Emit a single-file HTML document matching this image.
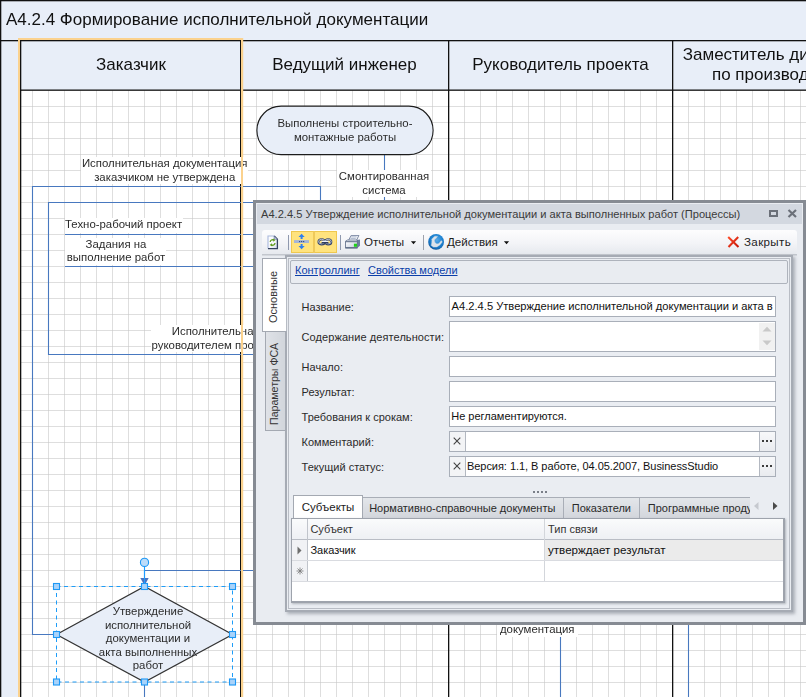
<!DOCTYPE html>
<html>
<head>
<meta charset="utf-8">
<title>A4.2.4</title>
<style>
html,body{margin:0;padding:0;}
body{width:806px;height:697px;overflow:hidden;background:#fff;position:relative;font-family:"Liberation Sans",sans-serif;}
#diagram{position:absolute;left:0;top:0;width:806px;height:697px;}
.abs{position:absolute;}
.vt,.hd,.ttl{will-change:transform;}
.vt{font-family:"Liberation Sans",sans-serif;font-size:11.4px;color:#2b2b2b;position:absolute;white-space:nowrap;text-align:center;line-height:13.7px;background:#fff;}
.hd{position:absolute;font-size:17px;color:#111;text-align:center;white-space:nowrap;}
/* dialog */
#dlg{position:absolute;left:253px;top:200px;width:553px;height:425px;background:#868b93;font-size:11px;color:#222;}
#dlg .inner{position:absolute;left:3px;top:3px;width:547px;height:419px;background:#e9ecf1;}
#dlg .title{position:absolute;left:1px;top:1px;width:545px;height:20px;background:#d3d8e0;}
.lbl{position:absolute;left:45.6px;white-space:nowrap;font-size:11px;color:#2a2a2a;line-height:13px;}
.fld{position:absolute;left:193px;width:325px;height:19px;border:1px solid #a9afb9;background:#fff;font-size:11px;line-height:19px;white-space:nowrap;overflow:hidden;color:#111;}

.tbt{font-size:11.6px;line-height:16px;color:#1e1e1e;white-space:nowrap;}
.lnk{font-size:11px;line-height:14px;color:#0b3ea8;text-decoration:underline;white-space:nowrap;}
.vtab span{position:absolute;left:50%;top:50%;height:14px;line-height:14px;margin-top:-7px;text-align:center;white-space:nowrap;font-size:11px;color:#333;transform-origin:center center;transform:rotate(-90deg);}
.xb{position:absolute;left:194px;width:15px;height:19px;background:#f3f4f6;border-right:1px solid #b3b8c1;}
.eb{position:absolute;left:503.4px;width:14.6px;height:19px;background:linear-gradient(#f7f8fa,#e9ebef);border-left:1px solid #b3b8c1;}
.eb i{position:absolute;top:8px;width:2px;height:2px;background:#3c3c3c;}
.eb i:nth-child(1){left:2px;}.eb i:nth-child(2){left:5.6px;}.eb i:nth-child(3){left:9.2px;}
.btab{height:20px;border:1px solid #a9aeb7;border-bottom:none;border-left:none;background:linear-gradient(#e3e6ea,#d3d6dc);text-align:center;line-height:20px;font-size:11px;color:#2a2a2a;white-space:nowrap;}
.gt{font-size:11px;line-height:14px;color:#111;white-space:nowrap;}
</style>
</head>
<body>
<svg id="diagram" width="806" height="697" viewBox="0 0 806 697">
  <defs>
    <pattern id="grid" x="32" y="106" width="16" height="16" patternUnits="userSpaceOnUse">
      <rect x="0" y="0" width="1" height="16" fill="#dedede"/>
      <rect x="0" y="0" width="16" height="1" fill="#dedede"/>
      <rect x="0" y="0" width="1" height="1" fill="#d0d0d0"/>
    </pattern>
  </defs>
  <!-- page bg -->
  <rect x="0" y="0" width="806" height="697" fill="#e8eef8"/>
  <!-- grid area -->
  <rect x="21" y="90" width="785" height="607" fill="#fff"/>
  <rect x="21" y="90" width="785" height="607" fill="url(#grid)"/>
  <!-- outer borders -->
  <rect x="0" y="0" width="806" height="1.3" fill="#111"/>
  <rect x="0" y="0" width="1.3" height="697" fill="#111"/>
  <rect x="0" y="40" width="806" height="1.3" fill="#111"/>
  <rect x="20" y="89.5" width="786" height="1.3" fill="#111"/>
  <!-- lane dividers -->
  <rect x="20" y="40" width="1.3" height="657" fill="#111"/>
  <rect x="240" y="40" width="1.3" height="657" fill="#111"/>
  <rect x="448" y="40" width="1.3" height="657" fill="#111"/>
  <rect x="672" y="40" width="1.3" height="657" fill="#111"/>
  <!-- orange selection -->
  <rect x="18" y="38" width="2" height="659" fill="#fbd28e"/>
  <rect x="18" y="38" width="225" height="2" fill="#fbd28e"/>
  <rect x="241.3" y="38" width="1.9" height="659" fill="#fbd28e"/>

  <!-- connectors -->
  <g fill="none" stroke="#4878bf" stroke-width="1.1">
    <path d="M320.5 200 V186.5 H32.5 V634.5 H56"/>
    <path d="M253 202.5 H48.5 V354.5 H253"/>
    <path d="M65 234.5 H253"/>
    <path d="M65 266.5 H253"/>
    <path d="M384.5 155 V200"/>
    <path d="M253 570.5 H144.5 V580"/>
    <path d="M144.5 566.5 V583" stroke="#1d9bff"/>
    <path d="M144.5 682 V697"/>
    <path d="M560.5 624 V697"/>
    <path d="M688.5 624 V697"/>
  </g>
  <path d="M140.3 578 H148.7 L144.5 585.5 Z" fill="#4a73c0"/><rect x="144" y="578" width="1" height="6" fill="#1d9bff"/>

  <!-- rounded start shape -->
  <rect x="256.9" y="106.15" width="176.2" height="48.5" rx="24.2" ry="24.2" fill="#e8eef8" stroke="#1c1c1c" stroke-width="1.1"/>
  <!-- diamond -->
  <path d="M56.5 634.5 L144.5 586.5 L232.5 634.5 L144.5 682 Z" fill="#e8eef8" stroke="#333" stroke-width="1.2"/>
  <!-- selection -->
  <rect x="56.5" y="586.5" width="176" height="95.5" fill="none" stroke="#1e9df8" stroke-width="1" stroke-dasharray="4,3.5"/>
  <g fill="#a9d3fa" stroke="#1d98f5" stroke-width="1.1">
    <rect x="53.5" y="583.5" width="6" height="6"/><rect x="141.5" y="583.5" width="6" height="6"/><rect x="229.5" y="583.5" width="6" height="6"/>
    <rect x="53.5" y="631.5" width="6" height="6"/><rect x="229.5" y="631.5" width="6" height="6"/>
    <rect x="53.5" y="679" width="6" height="6"/><rect x="141.5" y="679" width="6" height="6"/><rect x="229.5" y="679" width="6" height="6"/>
    <circle cx="144.5" cy="562.4" r="4.1" fill="#bcdcfa"/>
  </g>
</svg>

<!-- Title + headers -->
<div class="abs ttl" style="left:6px;top:0;height:40px;line-height:40px;font-size:17px;color:#111;white-space:nowrap;">А4.2.4 Формирование исполнительной документации</div>
<div class="hd" style="left:21px;top:40.7px;width:220px;line-height:48px;">Заказчик</div>
<div class="hd" style="left:241px;top:40.7px;width:207px;line-height:48px;">Ведущий инженер</div>
<div class="hd" style="left:449px;top:40.7px;width:223px;line-height:48px;">Руководитель проекта</div>
<div class="abs" style="left:672.5px;top:44.7px;width:133.5px;height:42px;overflow:hidden;"><div class="hd" style="left:0;top:0;width:208px;line-height:20px;">Заместитель директора<br>по производству</div></div>

<!-- Visio text labels -->
<div class="vt" style="left:256.6px;top:115.6px;width:176px;background:none;line-height:14px;">Выполнены строительно-<br>монтажные работы</div>
<div class="vt" style="left:81.2px;top:157px;width:167.4px;height:27.4px;line-height:13.6px;">Исполнительная документация<br>заказчиком не утверждена</div>
<div class="vt" style="left:337px;top:170px;width:94px;">Смонтированная<br>система</div>
<div class="vt" style="left:65px;top:218px;width:118px;height:14.5px;text-align:left;">Техно-рабочий проект</div>
<div class="vt" style="left:65px;top:238.3px;width:102px;height:27px;line-height:13px;clip-path:inset(0 1.4px 0 0);">Задания на<br>выполнение работ</div>
<div class="vt" style="left:151px;top:325px;width:110px;height:27.4px;text-align:left;overflow:hidden;"><span style="margin-left:20.8px;">Исполнительная документация</span><br><span style="margin-left:0.6px;">руководителем проекта не утверждена</span></div>
<div class="vt" style="left:88px;top:605.2px;width:120px;background:none;line-height:13.6px;">Утверждение<br>исполнительной<br>документации и<br>акта выполненных<br>работ</div>
<div class="vt" style="left:496.5px;top:622.7px;width:80.5px;height:13.6px;">документация</div>
<!-- orange lane selection on top of labels -->
<div class="abs" style="left:241.3px;top:38px;width:1.9px;height:659px;background:#fbd28e;"></div>

<!-- DIALOG -->
<div id="dlg">
 <div class="inner">
  <div class="title"></div>
  <div class="abs" style="left:5px;top:4px;line-height:14px;font-size:11.1px;color:#3a3a3a;white-space:nowrap;">А4.2.4.5 Утверждение исполнительной документации и акта выполненных работ (Процессы)</div>
  <!-- window buttons -->
  <div class="abs" style="left:513px;top:7px;width:5px;height:3px;border:2px solid #6b7079;"></div>
  <svg class="abs" style="left:531px;top:6px;" width="11" height="9" viewBox="0 0 11 9"><path d="M1.5 1 L9 8 M9 1 L1.5 8" stroke="#6b7079" stroke-width="2.2" fill="none"/></svg>

  <!-- toolbar -->
  <div class="abs" id="tb" style="left:6px;top:27px;width:535px;height:24px;border-radius:3px;background:linear-gradient(#fdfdfe,#f3f4f7 55%,#e6e9ee);"></div>
  <div class="abs" style="left:6px;top:51px;width:535px;height:2px;background:linear-gradient(#b9bdc5,#dfe2e7);"></div>
  <!-- icon1 doc refresh -->
  <svg class="abs" style="left:10.7px;top:31.5px;" width="12" height="15" viewBox="0 0 12 15">
    <defs><linearGradient id="pg" x1="0" y1="0" x2="1" y2="1"><stop offset="0" stop-color="#ffffff"/><stop offset="0.6" stop-color="#f4f6fb"/><stop offset="1" stop-color="#cfd8ea"/></linearGradient></defs>
    <path d="M1 1 H7.2 L10.4 4.2 V13.6 H1 Z" fill="url(#pg)"/>
    <path d="M1 13.6 V1 H7.2" fill="none" stroke="#a9b9dc" stroke-width="1.1"/>
    <path d="M7.2 1 L10.4 4.2 V13.6 H1" fill="none" stroke="#33425f" stroke-width="1.3"/>
    <path d="M7.2 1 V4.2 H10.4 Z" fill="#c9d4ea" stroke="#55648a" stroke-width="0.6"/>
    <path d="M3.2 7 A2.5 2.5 0 0 1 6.8 5" fill="none" stroke="#5f9c1c" stroke-width="1.3"/>
    <path d="M8 8 A2.5 2.5 0 0 1 4.4 10" fill="none" stroke="#5f9c1c" stroke-width="1.3"/>
    <path d="M6 3.6 L8.5 5 L6.3 6.7 Z" fill="#5f9c1c"/><path d="M5.2 11.4 L2.7 10 L4.9 8.3 Z" fill="#5f9c1c"/>
  </svg>
  <div class="abs" style="left:32px;top:32px;width:1.2px;height:15px;background:#8f99ae;"></div>
  <!-- yellow toggles -->
  <div class="abs" style="left:35px;top:28px;width:43.8px;height:20px;background:#ffe37e;border:1px solid #efc84f;"></div>
  <div class="abs" style="left:57.4px;top:28px;width:1.4px;height:22px;background:#efc95a;"></div>
  <svg class="abs" style="left:37px;top:30px;" width="17" height="17" viewBox="0 0 17 17">
    <rect x="1" y="7.1" width="15" height="2.9" fill="#a5b5d6"/>
    <rect x="6.1" y="8" width="1.1" height="1.1" fill="#27427f"/><rect x="8.1" y="8" width="1.1" height="1.1" fill="#27427f"/><rect x="10.1" y="8" width="1.1" height="1.1" fill="#27427f"/>
    <path d="M8.6 0.8 L11.7 4 H9.6 V6 H7.6 V4 H5.5 Z" fill="#2f7fee"/>
    <path d="M8.6 16.3 L11.7 13.1 H9.6 V11.1 H7.6 V13.1 H5.5 Z" fill="#2f7fee"/>
  </svg>
  <svg class="abs" style="left:60.5px;top:35.3px;" width="16" height="8" viewBox="0 0 16 8">
    <ellipse cx="4.6" cy="3.9" rx="3.1" ry="2.5" fill="none" stroke="#36456a" stroke-width="2.1"/>
    <ellipse cx="11.2" cy="3.9" rx="3.1" ry="2.5" fill="none" stroke="#36456a" stroke-width="2.1"/>
    <ellipse cx="4.6" cy="3.6" rx="3" ry="2.3" fill="none" stroke="#e4e9f4" stroke-width="0.7"/>
    <ellipse cx="11.2" cy="3.6" rx="3" ry="2.3" fill="none" stroke="#e4e9f4" stroke-width="0.7"/>
    <rect x="4.6" y="2.9" width="6.8" height="1.1" fill="#eef1f8"/>
    <rect x="4.6" y="4" width="6.8" height="1.5" fill="#2f3d5c"/>
  </svg>
  <div class="abs" style="left:84px;top:32px;width:1.2px;height:15px;background:#8f99ae;"></div>
  <!-- printer -->
  <svg class="abs" style="left:89px;top:32px;" width="16" height="14" viewBox="0 0 16 14">
    <defs><linearGradient id="pb" x1="0" y1="0" x2="1" y2="1"><stop offset="0" stop-color="#fbfcfe"/><stop offset="1" stop-color="#c3ccdb"/></linearGradient></defs>
    <path d="M6.2 0.4 H13.9 L11.4 5.6 H3.4 Z" fill="#f4f6fa" stroke="#5f6f8e" stroke-width="0.8"/>
    <path d="M6.2 1.9 H11.6 M5.4 3.6 H10.8" stroke="#9aa8c2" stroke-width="0.8"/>
    <path d="M12 5 L15 4.4 V10.8 L12.2 13 Z" fill="#6d7f9f"/>
    <path d="M0.4 6.4 L2.2 5 H12.2 L12.2 6.8 Z" fill="#dfe4ee" stroke="#4a5a78" stroke-width="0.6"/>
    <rect x="0.5" y="6.8" width="11.8" height="6.2" fill="url(#pb)" stroke="#5a6985" stroke-width="0.8"/>
    <rect x="0.9" y="12.2" width="11.2" height="1.1" fill="#55647f"/>
    <rect x="8.9" y="8.7" width="3.1" height="3.1" fill="#1fd21a"/>
  </svg>
  <div class="abs tbt" style="left:108px;top:31px;">Отчеты</div>
  <svg class="abs" style="left:154px;top:37.5px;" width="7" height="4" viewBox="0 0 7 4"><path d="M0.9 0.3 H6.1 L3.5 3.3 Z" fill="#111"/></svg>
  <div class="abs" style="left:167px;top:32px;width:1px;height:15px;background:#9da2ac;"></div>
  <!-- globe -->
  <svg class="abs" style="left:172px;top:31px;" width="17" height="17" viewBox="0 0 17 17">
    <defs><radialGradient id="gg" cx="0.55" cy="0.38" r="0.62"><stop offset="0" stop-color="#58a9e8"/><stop offset="0.55" stop-color="#1f84d2"/><stop offset="0.86" stop-color="#1670bd"/><stop offset="1" stop-color="#0b4f92"/></radialGradient></defs>
    <circle cx="8.1" cy="7.9" r="7.9" fill="url(#gg)"/>
    <path d="M6.9 2.2 L9.6 2.4 L8.4 3.9 L6.4 5.9 L6.9 8.4 L8.9 9.9 L10.9 9.4 L13.3 6.6 L14.3 7.9 L11.9 10.9 L8.9 12.9 L5.4 13.1 L3.2 11.4 L3.7 8.9 L3.9 6.4 L3.7 5.2 L5.4 3.4 Z" fill="#dce3eb" stroke="#c9d3df" stroke-width="0.4" stroke-linejoin="round"/>
  </svg>
  <div class="abs tbt" style="left:191px;top:31px;">Действия</div>
  <svg class="abs" style="left:247px;top:37.5px;" width="7" height="4" viewBox="0 0 7 4"><path d="M0.9 0.3 H6.1 L3.5 3.3 Z" fill="#111"/></svg>
  <!-- close -->
  <svg class="abs" style="left:471px;top:33px;" width="13" height="12" viewBox="0 0 13 12"><defs><linearGradient id="rx" x1="0" y1="0" x2="1" y2="1"><stop offset="0" stop-color="#ff4a26"/><stop offset="1" stop-color="#c4170a"/></linearGradient></defs><path d="M1.2 1 L11.5 11 M11.2 1 L1.5 11" stroke="url(#rx)" stroke-width="2.05" fill="none"/></svg>
  <div class="abs tbt" style="left:488px;top:31px;letter-spacing:0.35px;">Закрыть</div>

  <!-- content panel -->
  <div class="abs" style="left:29px;top:52px;width:504px;height:353px;border:2px solid #a6abb4;background:#eaedf2;box-shadow:2px 2px 3px rgba(110,115,128,0.5);"></div>
  <div class="abs" style="left:32px;top:55px;width:500px;height:349px;border:1px solid #b9bdc5;"></div>
  <!-- left tabs -->
  <div class="abs" style="left:8.6px;top:128px;width:19.4px;height:98px;border:1px solid #a4a9b2;border-right:none;background:linear-gradient(90deg,#dfe2e7,#d2d6dc);"></div>
  <div class="abs" style="left:6px;top:55px;width:23px;height:72px;border:1px solid #a4a9b2;border-right:none;background:#fff;"></div>
  <div class="abs" style="left:30px;top:56px;width:1px;height:72px;background:#b7bcc4;"></div>
  <div class="abs" style="left:31px;top:56px;width:1px;height:72px;background:#e6e9ee;"></div>
  <div class="abs vtab" style="left:4.3px;top:57.2px;width:26px;height:73px;"><span style="width:74px;margin-left:-37px;">Основные</span></div>
  <div class="abs vtab" style="left:7.3px;top:132px;width:22px;height:98px;"><span style="width:98px;margin-left:-49px;font-size:10.6px;">Параметры ФСА</span></div>

  <!-- links panel -->
  <div class="abs" style="left:34px;top:57px;width:496px;height:22px;border:1px solid #aeb3bc;border-radius:2px;background:#e9ecf1;"></div>
  <div class="abs lnk" style="left:39px;top:60px;">Контроллинг</div>
  <div class="abs lnk" style="left:112px;top:60px;">Свойства модели</div>

  <!-- labels -->
  <div class="lbl" style="top:98px;">Название:</div>
  <div class="lbl" style="top:128px;letter-spacing:0.08px;">Содержание деятельности:</div>
  <div class="lbl" style="top:158px;">Начало:</div>
  <div class="lbl" style="top:183px;">Результат:</div>
  <div class="lbl" style="top:208px;">Требования к срокам:</div>
  <div class="lbl" style="top:233px;">Комментарий:</div>
  <div class="lbl" style="top:258px;">Текущий статус:</div>
  <!-- fields -->
  <div class="fld" style="top:93px;"><span id="f1" style="margin-left:1.6px;font-size:11.15px;letter-spacing:0px;">А4.2.4.5 Утверждение исполнительной документации и акта в</span></div>
  <div class="fld" style="top:118px;height:29px;"></div>
  <div class="abs" style="left:503px;top:120px;width:16px;height:27px;background:#f1f1f1;"></div>
  <svg class="abs" style="left:506px;top:123px;" width="10" height="21" viewBox="0 0 10 21"><path d="M0.5 5.5 H9.5 L5 0.8 Z" fill="#c9c9c9"/><path d="M0.5 14.5 H9.5 L5 19.2 Z" fill="#c9c9c9"/></svg>
  <div class="fld" style="top:153px;"></div>
  <div class="fld" style="top:178px;"></div>
  <div class="fld" style="top:203px;"><span style="margin-left:1.2px;">Не регламентируются.</span></div>
  <div class="fld" style="top:228px;"></div>
  <div class="fld" style="top:253px;"><span style="margin-left:17px;letter-spacing:-0.05px;">Версия: 1.1, В работе, 04.05.2007, BusinessStudio</span></div>
  <!-- X and ... buttons -->
  <div class="xb" style="top:229px;"></div><div class="xb" style="top:254px;"></div>
  <svg class="abs" style="left:197px;top:234px;" width="8" height="8" viewBox="0 0 8 8"><path d="M0.7 0.7 L7.3 7.3 M7.3 0.7 L0.7 7.3" stroke="#444" stroke-width="1.1"/></svg>
  <svg class="abs" style="left:197px;top:259px;" width="8" height="8" viewBox="0 0 8 8"><path d="M0.7 0.7 L7.3 7.3 M7.3 0.7 L0.7 7.3" stroke="#444" stroke-width="1.1"/></svg>
  <div class="eb" style="top:229px;"><i></i><i></i><i></i></div><div class="eb" style="top:254px;"><i></i><i></i><i></i></div>

  <!-- splitter dots -->
  <div class="abs" style="left:277px;top:288px;width:15px;height:2px;background:repeating-linear-gradient(90deg,#7a7f88 0 1.6px,transparent 1.6px 4px);"></div>

  <!-- bottom tabs -->
  <div class="abs btab" style="left:106px;top:294px;width:200.6px;border-left:none;">Нормативно-справочные документы</div>
  <div class="abs btab" style="left:307.6px;top:294px;width:75.6px;">Показатели</div>
  <div class="abs btab" style="left:384.2px;top:294px;width:109.8px;border-right:none;text-align:left;text-indent:7.6px;overflow:hidden;">Программные продукты</div>
  <div class="abs" style="left:37px;top:292.4px;width:68px;height:23px;border:1px solid #a4a9b2;border-bottom:none;background:#fff;text-align:center;line-height:22px;font-size:11.5px;color:#222;">Субъекты</div>
  <svg class="abs" style="left:496.4px;top:298px;" width="28" height="10" viewBox="0 0 28 10"><path d="M6.5 1 V9 L2 5 Z" fill="#c6c9cf"/><path d="M21 1 V9 L25.5 5 Z" fill="#4a4a4a"/></svg>

  <!-- grid -->
  <div class="abs" style="left:34.6px;top:315px;width:491px;height:82.4px;border:1px solid #9ea3ac;border-width:1px 2px 2px 1.6px;background:#fff;box-shadow:1px 1px 2px rgba(120,125,135,0.5);"></div>
  <div class="abs" style="left:36px;top:316px;width:491px;height:20px;background:linear-gradient(#fafbfc,#eef0f4);border-bottom:1px solid #b9bdc5;"></div>
  <div class="abs" style="left:36px;top:337px;width:15px;height:41px;background:#f1f2f5;"></div>
  <div class="abs" style="left:50.7px;top:316px;width:1px;height:63px;background:#c0c4cb;"></div>
  <div class="abs" style="left:288px;top:316px;width:1px;height:63px;background:#d3d6db;"></div>
  <div class="abs" style="left:289px;top:337px;width:238px;height:20px;background:#ebebeb;"></div>
  <div class="abs" style="left:36px;top:357px;width:491px;height:1px;background:#d9dbe0;"></div>
  <div class="abs" style="left:36px;top:378px;width:491px;height:1px;background:#d9dbe0;"></div>
  <div class="abs gt" style="left:54.4px;top:318.6px;color:#333;">Субъект</div>
  <div class="abs gt" style="left:292px;top:318.6px;color:#333;">Тип связи</div>
  <div class="abs gt" style="left:54.4px;top:339.6px;">Заказчик</div>
  <div class="abs gt" style="left:292px;top:339.6px;font-size:11.6px;">утверждает результат</div>
  <svg class="abs" style="left:41px;top:343px;" width="5" height="9" viewBox="0 0 5 9"><path d="M0.5 0.5 V8.5 L4.5 4.5 Z" fill="#6e6e6e"/></svg>
  <svg class="abs" style="left:39.5px;top:364px;" width="8" height="8" viewBox="0 0 8 8"><path d="M4 0.5 V7.5 M0.5 4 H7.5 M1.5 1.5 L6.5 6.5 M6.5 1.5 L1.5 6.5" stroke="#777" stroke-width="0.8"/></svg>
 </div>
</div>
</body>
</html>
